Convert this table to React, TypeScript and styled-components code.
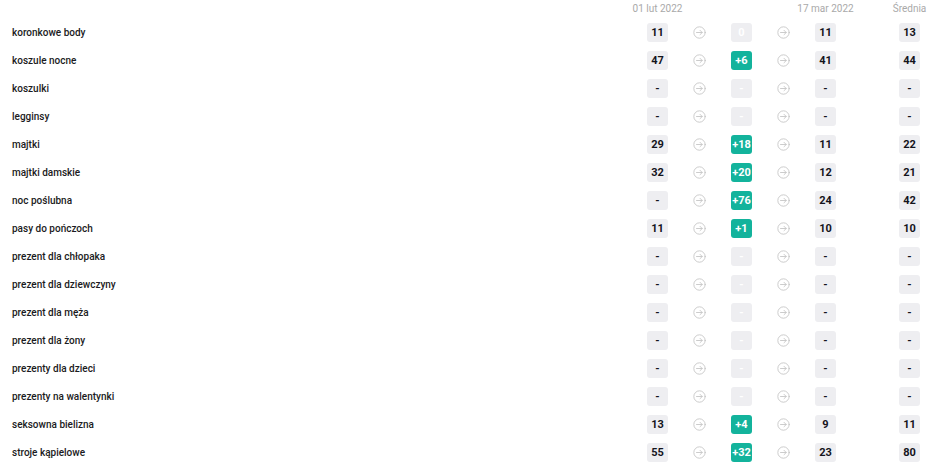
import React from "react";
import styled, { createGlobalStyle } from "styled-components";

const Global = createGlobalStyle`
  html, body { margin: 0; padding: 0; background: #fff; }
  body { font-family: Roboto, "Noto Sans", Arial, sans-serif; }
`;

const Table = styled.div`
  display: grid;
  grid-template-columns: 1fr 21px 63px 21px 63px 21px 63px 21px;
  grid-auto-rows: 28px;
  grid-template-rows: 18px;
  padding: 0 17px 0 12px;
  align-items: center;
`;

const HeadCell = styled.div`
  display: flex;
  justify-content: center;
  white-space: nowrap;
  font-size: 10px;
  line-height: 16px;
  color: #a9a9a9;
`;

const Label = styled.div`
  font-size: 10px;
  font-weight: 500;
  color: #1b1b22;
  white-space: nowrap;
`;

const Badge = styled.div<{ $variant: "gray" | "green" | "empty" }>`
  width: 21px;
  height: 19px;
  border-radius: 3px;
  display: flex;
  align-items: center;
  justify-content: center;
  font-size: 11px;
  font-weight: 700;
  background: ${(p) => (p.$variant === "green" ? "#13b39c" : "#eeeef1")};
  color: ${(p) => (p.$variant === "gray" ? "#14141c" : "#ffffff")};
`;

const ArrowCell = styled.div`
  display: flex;
  justify-content: center;
  align-items: center;
  color: #c4c4c4;
`;

const Arrow = () => (
  <ArrowCell>
    <svg width="13" height="13" viewBox="0 0 24 24" fill="none" stroke="currentColor" strokeWidth="1.6" strokeLinecap="round" strokeLinejoin="round">
      <circle cx="12" cy="12" r="10.5" />
      <path d="M6.5 12h10.5" />
      <path d="M13 8l4 4-4 4" />
    </svg>
  </ArrowCell>
);

type Row = [string, string, string, string, string];

const rows: Row[] = [
  ["koronkowe body", "11", "0", "11", "13"],
  ["koszule nocne", "47", "+6", "41", "44"],
  ["koszulki", "-", "-", "-", "-"],
  ["legginsy", "-", "-", "-", "-"],
  ["majtki", "29", "+18", "11", "22"],
  ["majtki damskie", "32", "+20", "12", "21"],
  ["noc poślubna", "-", "+76", "24", "42"],
  ["pasy do pończoch", "11", "+1", "10", "10"],
  ["prezent dla chłopaka", "-", "-", "-", "-"],
  ["prezent dla dziewczyny", "-", "-", "-", "-"],
  ["prezent dla męża", "-", "-", "-", "-"],
  ["prezent dla żony", "-", "-", "-", "-"],
  ["prezenty dla dzieci", "-", "-", "-", "-"],
  ["prezenty na walentynki", "-", "-", "-", "-"],
  ["seksowna bielizna", "13", "+4", "9", "11"],
  ["stroje kąpielowe", "55", "+32", "23", "80"],
];

const Empty = styled.div``;

export default function App() {
  return (
    <>
      <Global />
      <Table>
        <Empty />
        <HeadCell>01 lut 2022</HeadCell>
        <Empty />
        <Empty />
        <Empty />
        <HeadCell>17 mar 2022</HeadCell>
        <Empty />
        <HeadCell>Średnia</HeadCell>
        {rows.map(([label, a, d, b, avg]) => (
          <React.Fragment key={label}>
            <Label>{label}</Label>
            <Badge $variant="gray">{a}</Badge>
            <Arrow />
            <Badge $variant={d.startsWith("+") ? "green" : "empty"}>{d}</Badge>
            <Arrow />
            <Badge $variant="gray">{b}</Badge>
            <Empty />
            <Badge $variant="gray">{avg}</Badge>
          </React.Fragment>
        ))}
      </Table>
    </>
  );
}
